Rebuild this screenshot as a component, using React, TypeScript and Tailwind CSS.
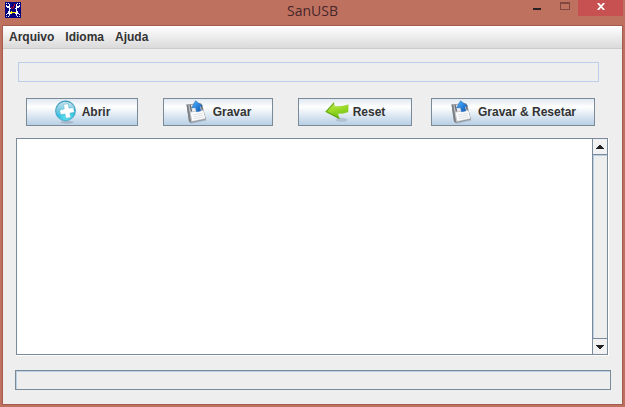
import type { ReactNode } from "react";

function AppIcon() {
  return (
    <svg width="16" height="16" viewBox="0 0 16 16" shapeRendering="crispEdges" aria-hidden="true">
      <path fill="#000080" d="M0 0h16v16H0z" />
      <path
        fill="#fff"
        d="M1 1h1v1H1zM3 1h1v1H3zM4 2h1v2H4zM1 3h1v1h3v2h1v1H5v2H4V6H2V5H1zM3 9h2v1h1v2H5v1H4v-1H2v-1h1zM1 12h1v1H1zM3 14h1v1H3zM14 1h1v1h-1zM12 1h1v1h-1zM11 2h1v2h-1zM14 3h1v2h-1v1h-2v3h-1V7h-1V6h1V4h3zM11 9h2v2h1v1h-2v1h-1v-1h-1v-2h1zM14 12h1v1h-1zM12 14h1v1h-1z"
      />
      <path fill="#b8b8e0" d="M1 14h1v1H1zM14 14h1v1h-1zM4 13h1v1H4zM11 13h1v1h-1z" />
      <path fill="#e00018" d="M9 2h1v2H9zM8 4h1v2H8zM7 6h1v1H7zM6 5h1v1H6z" />
      <path fill="#ff0" d="M5 10h6v1H5zM6 9h1v1H6zM6 11h1v1H6z" />
    </svg>
  );
}

function AddIcon() {
  return (
    <svg width="24" height="24" viewBox="0 0 24 24" aria-hidden="true">
      <defs>
        <radialGradient id="add-ball" cx=".55" cy=".8" r=".8">
          <stop offset="0" stopColor="#62e4f2" />
          <stop offset=".55" stopColor="#35bcdc" />
          <stop offset="1" stopColor="#2a8fb8" />
        </radialGradient>
        <linearGradient id="add-shine" x2="0" y2="1">
          <stop offset="0" stopColor="#fff" stopOpacity=".75" />
          <stop offset="1" stopColor="#fff" stopOpacity=".1" />
        </linearGradient>
      </defs>
      <ellipse cx="13" cy="22.3" rx="6.500" ry="1.400" fill="#8193a5" opacity=".45" />
      <circle cx="11.500" cy="10.800" r="10" fill="url(#add-ball)" stroke="#2b93b5" strokeWidth=".6" />
      <path d="M2 10.800a9.500 9.500 0 0 1 18.700-2C16 8 9 14.800 3 14.800a9 9 0 0 1-1-4z" fill="url(#add-shine)" />
      <path
        d="M9.500 4.500l4.500-.8 1 4.500 4.500-.6.900 4.700-4.500.8.800 4.300-4.700.8-1-4.300-4.500.7-.8-4.700 4.600-.9z"
        fill="#fff"
        stroke="#3aa3c2"
        strokeWidth=".4"
      />
    </svg>
  );
}

function SaveIcon({ id }: { id: string }) {
  return (
    <svg width="24" height="24" viewBox="0 0 24 24" aria-hidden="true">
      <defs>
        <linearGradient id={id} x2="1" y2="1">
          <stop offset="0" stopColor="#5bbcf8" />
          <stop offset=".5" stopColor="#2a86e0" />
          <stop offset="1" stopColor="#1453a8" />
        </linearGradient>
      </defs>
      <path d="M4 22.600l16-3 1.500 1-15 2.900z" fill="#7f8a96" opacity=".45" />
      <path d="M1.500 4.500L15.500 3l1.500 1.300L21 19.500 5.500 22.800 4 21.500z" fill="#85898e" />
      <path d="M3.200 5l13-1.500L20.300 19 6 22z" fill="#c0c3c6" />
      <path d="M1.500 4.500l1.700.5L6 22l-2-.6z" fill="#7d8186" />
      <path d="M4.500 5.200l1.500-.2 1.200 6.200-1.400.3zM15 4.200l1.300-.1 1.700 6-1.500.3z" fill="#6c7075" />
      <path d="M6 5l9-.9 1.500 6-9.200 1.300z" fill="#e8ebee" />
      <path d="M5.600 12.500l12.700-2 1.900 7.800L7.300 21z" fill="#fcfcfc" />
      <path d="M8 14.800l9.500-1.600M8.400 16.800l9.600-1.700M8.800 18.800l9.600-1.800" stroke="#cccfd2" strokeWidth=".6" />
      <path
        d="M10.500.8L17.500 6l-2.600.6.900 4.300-4.300.9-1-4.400-4 .5z"
        fill={`url(#${id})`}
        stroke="#2467b4"
        strokeWidth=".5"
      />
    </svg>
  );
}

function ResetIcon() {
  return (
    <svg width="24" height="24" viewBox="0 0 24 24" aria-hidden="true">
      <defs>
        <linearGradient id="reset-arrow" x2=".3" y2="1">
          <stop offset="0" stopColor="#cdea5c" />
          <stop offset=".5" stopColor="#9ddb28" />
          <stop offset="1" stopColor="#6fc010" />
        </linearGradient>
      </defs>
      <ellipse cx="16.500" cy="19.800" rx="6" ry="2" fill="#8b9bad" opacity=".4" />
      <path
        d="M.5 11.700L8.800 2.500l.8 3.900Q16 7.200 23.300 4.800L23 12Q18 13.900 12.800 13.500l1.700 5.400z"
        fill="url(#reset-arrow)"
        stroke="#86c92c"
        strokeWidth=".4"
        strokeLinejoin="round"
      />
      <path d="M.5 11.700L8.800 2.500l.2 1.200-7 7.800 12 6.100.5 1.300z" fill="#4d9412" opacity=".75" />
    </svg>
  );
}

function ToolButton({ icon, size, children }: { icon: ReactNode; size: string; children: ReactNode }) {
  return (
    <button
      type="button"
      className={`flex h-7 shrink-0 items-center justify-center gap-1 border border-[#7a8a99] bg-linear-to-b from-[#dfe8f1] via-white via-30% to-[#b8cfe5] ${size}`}
    >
      {icon}
      <span>{children}</span>
    </button>
  );
}

function ScrollButton({ label, up }: { label: string; up?: boolean }) {
  return (
    <button
      type="button"
      aria-label={label}
      className={`flex h-4 items-center justify-center border-[#7a8a99] bg-[#f2f2f2] ${up ? "border-b" : "border-t"}`}
    >
      <svg width="8" height="4" viewBox="0 0 8 4" shapeRendering="crispEdges" aria-hidden="true">
        <path
          fill="#222"
          d={up ? "M3 0h2v1h1v1h1v1h1v1H0V3h1V2h1V1h1z" : "M0 0h8v1H7v1H6v1H5v1H3V3H2V2H1V1H0z"}
        />
      </svg>
    </button>
  );
}

export default function App() {
  return (
    <div className="flex min-h-screen flex-col bg-[#bf7160] px-0.5 pb-0.5 font-['Liberation_Sans',Arial,sans-serif] text-xs font-bold text-[#333]">
      <header className="grid h-[25px] grid-cols-[1fr_auto_1fr] items-start">
        <div className="pt-0.5 pl-[3px]">
          <AppIcon />
        </div>
        <h1 className="font-['Open_Sans','Noto_Sans',sans-serif] text-sm leading-[21px] font-normal text-[#45262a]">
          SanUSB
        </h1>
        <div className="flex justify-end">
          <button type="button" aria-label="Minimizar" className="flex h-4 w-7 justify-center pt-2">
            <span className="h-0.5 w-2 bg-[#292022]" />
          </button>
          <button type="button" aria-label="Maximizar" className="flex h-4 w-[27px] justify-center pt-0.5">
            <span className="h-2 w-2.5 border border-t-2 border-[#80483f]" />
          </button>
          <button type="button" aria-label="Fechar" className="flex h-4 w-[45px] justify-center bg-[#c75050] pt-[3px]">
            <svg width="8" height="7" viewBox="0 0 8 7" aria-hidden="true">
              <path d="M.8 0l6.400 7M7.200 0L.8 7" stroke="#fff" strokeWidth="1.800" />
            </svg>
          </button>
        </div>
      </header>

      <div className="flex flex-1 flex-col border border-[#a65b4f] bg-[#eee]">
        <nav className="flex h-[23px] items-center gap-[11px] border-b border-[#ccc] bg-linear-to-b from-white to-[#dadada] px-1.5">
          <button type="button">Arquivo</button>
          <button type="button">Idioma</button>
          <button type="button">Ajuda</button>
        </nav>

        <main className="flex flex-1 flex-col pt-[13px] pr-[11px] pb-3.5 pl-3">
          <input
            type="text"
            readOnly
            aria-label="Arquivo selecionado"
            className="mr-3 ml-[3px] h-5 border border-[#b8cfe5] bg-[#eee] px-1 outline-none"
          />

          <div className="mt-4 flex gap-[19px] px-[11px]">
            <div className="flex gap-[25px]">
              <ToolButton icon={<AddIcon />} size="w-28">Abrir</ToolButton>
              <ToolButton icon={<SaveIcon id="save-arrow" />} size="w-[110px]">Gravar</ToolButton>
              <ToolButton icon={<ResetIcon />} size="w-[114px]">Reset</ToolButton>
            </div>
            <ToolButton icon={<SaveIcon id="save-reset-arrow" />} size="w-[164px]">Gravar &amp; Resetar</ToolButton>
          </div>

          <div className="mt-3 mr-0.5 ml-px flex flex-1 border-r border-b border-white">
            <div className="flex flex-1 border border-[#7a8a99]">
              <textarea
                aria-label="Mensagens"
                className="min-h-40 min-w-0 flex-1 resize-none bg-white p-1 font-normal outline-none"
              />
              <div className="flex w-[15px] flex-col border-l border-[#7a8a99]">
                <ScrollButton label="Rolar para cima" up />
                <div className="flex-1 border-t border-l border-[#b8cfe5]" />
                <ScrollButton label="Rolar para baixo" />
              </div>
            </div>
          </div>

          <div
            role="progressbar"
            aria-label="Progresso"
            aria-valuenow={0}
            className="mt-3.5 h-5 border border-[#7a8a99]"
          >
            <div className="h-full border-t border-l border-[#b8cfe5]" />
          </div>
        </main>
      </div>
    </div>
  );
}
